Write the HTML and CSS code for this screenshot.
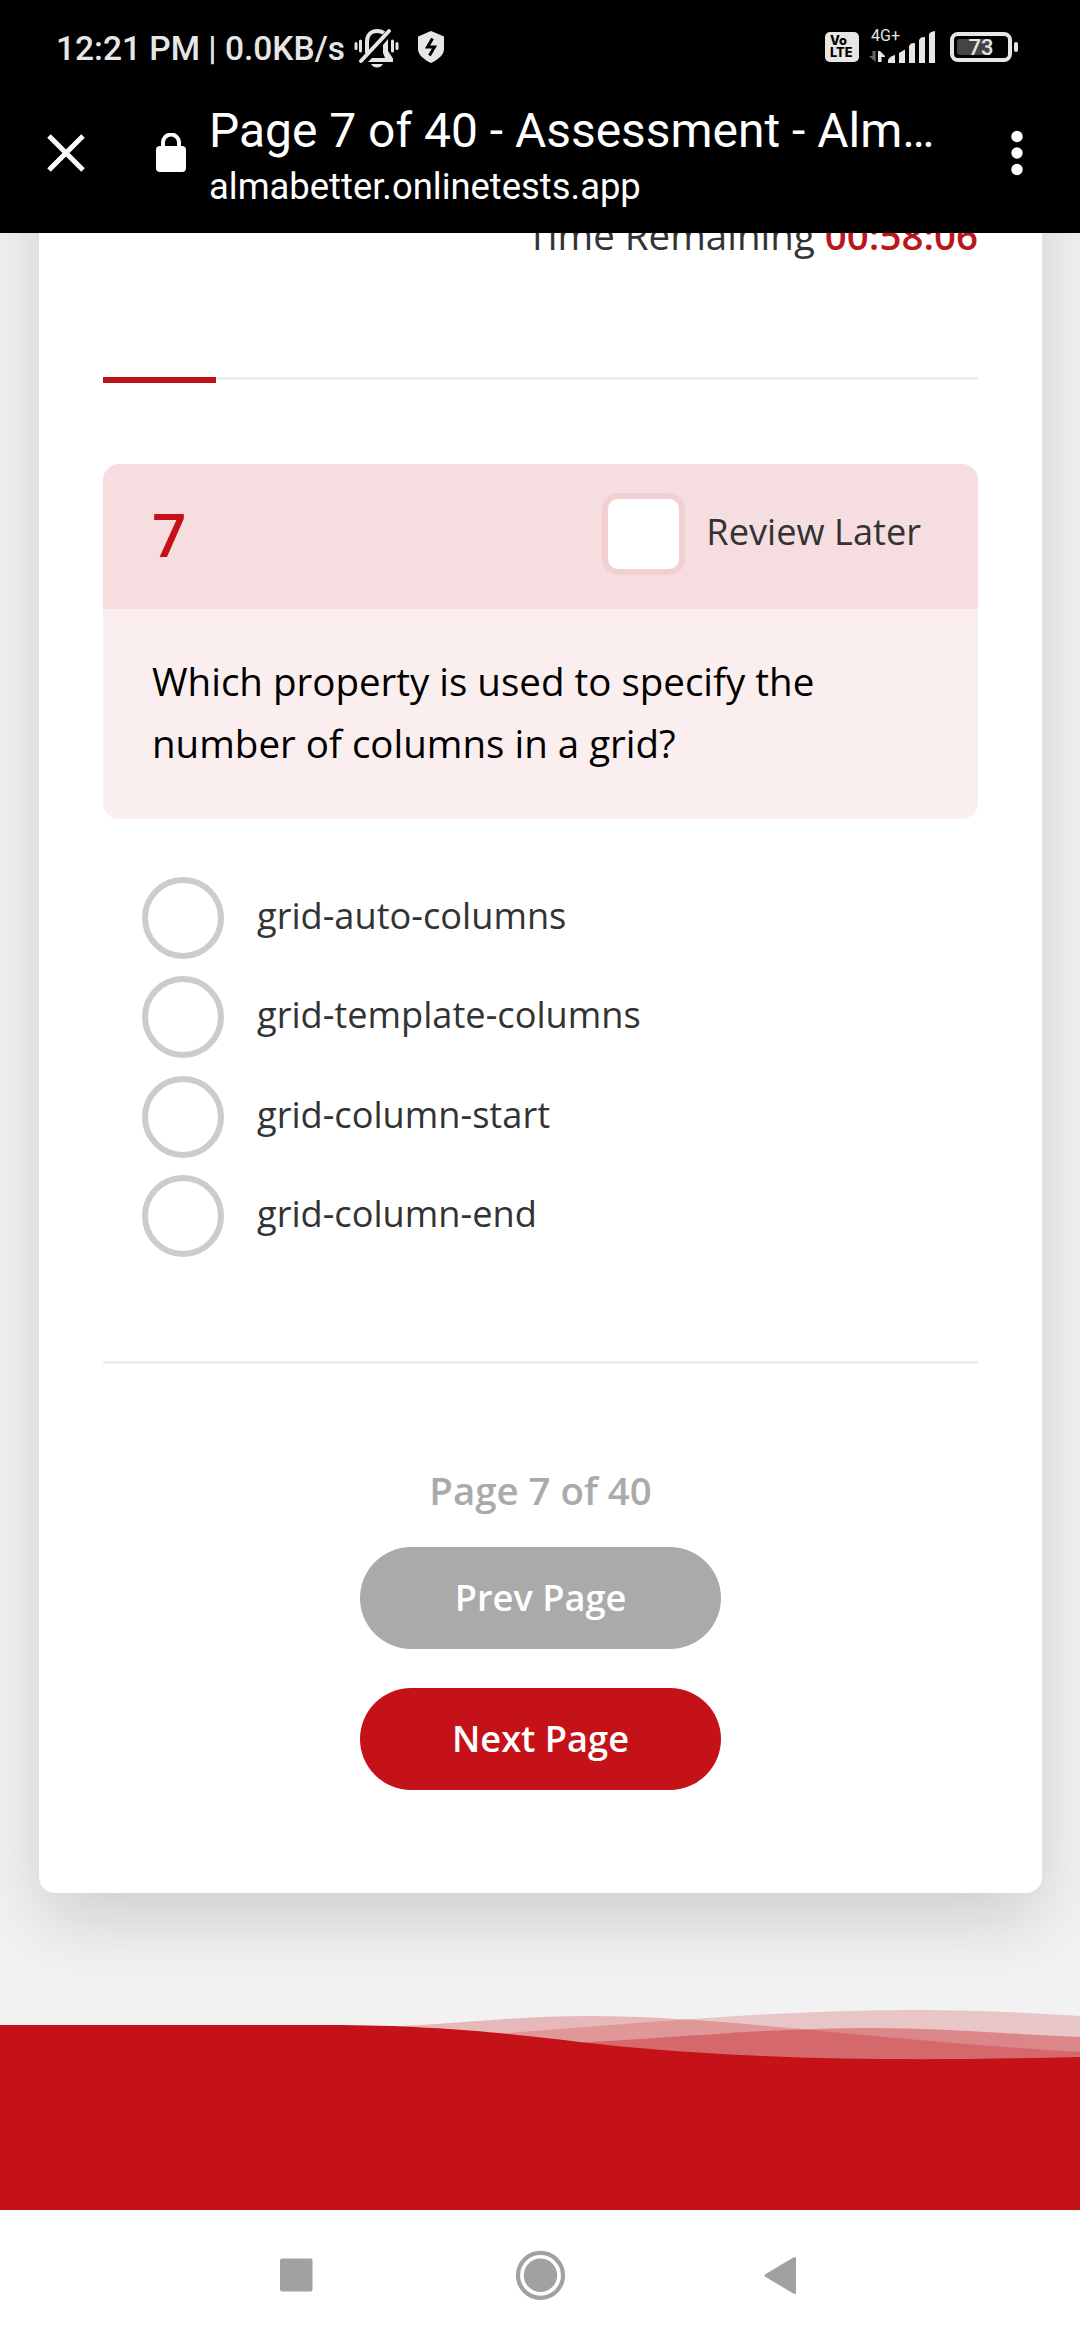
FILE: index.html
```html
<!DOCTYPE html>
<html lang="en">
<head>
<meta charset="utf-8">
<title>Page 7 of 40 - Assessment</title>
<link rel="stylesheet" href="styles.css">
</head>
<body>
<header class="top">
  <div class="status">
    <span class="status-text">12:21 PM | 0.0KB/s</span>
    <svg class="bell" width="46" height="42" viewBox="0 0 46 42">
      <g fill="none" stroke="#e6e6e6" stroke-linecap="round">
        <path stroke-width="3" d="M2 16.500v5M6.500 14v10M38.500 14v10M43 16.500v5"/>
        <path stroke-width="4" stroke-linecap="butt" d="M13 26V15C13 8 17 4 23 4C26 4 28 4.500 30 6"/>
        <path stroke-width="4" d="M7 34L35 4"/>
      </g>
      <path fill="#e6e6e6" d="M34 12V24L39 31.500V35H14L18 31H31L29 26V18ZM17 37H29Q27 40.500 23 40.500T17 37Z"/>
    </svg>
    <svg class="shield" width="28" height="32" viewBox="0 0 28 32">
      <path fill="#e6e6e6" d="M14 0L27 5.500V18C27 24 21 28.500 14 32C7 28.500 1 24 1 18V5.500Z"/>
      <path fill="none" stroke="#000" stroke-width="3" d="M15.500 7.500L10.500 16H17.500L12.500 24.500"/>
    </svg>
    <span class="volte"><b>Vo</b><b>LTE</b></span>
    <span class="signal">
      <span class="net">4G+</span>
      <svg width="68" height="34" viewBox="0 0 68 34">
        <path fill="#666" d="M3.500 21H6.500V32L0 26H3.500Z"/>
        <path fill="#e6e6e6" d="M9 21H11L16 26V27H12.500V32H9ZM19 33V30Q21 26 26 25V33ZM30 33V23L36 19.500V33ZM40 33V16L42 13.500L46 13V33ZM50 33V10L52 7.500L56 7V33ZM60 33V4L62 2L66 1V33Z"/>
      </svg>
    </span>
    <span class="battery"><span class="charge">73</span></span>
    <span class="nub"></span>
  </div>
  <div class="tab">
    <svg class="close" width="38" height="38" viewBox="0 0 38 38"><path fill="none" stroke="#fff" stroke-width="5" d="M2 2L36 36M36 2L2 36"/></svg>
    <svg class="lock" width="30" height="39" viewBox="0 0 30 39">
      <rect y="13" width="30" height="26" rx="4" fill="#fff"/>
      <path fill="none" stroke="#fff" stroke-width="4" d="M7 15V9.500a8 8 0 0 1 16 0V15"/>
    </svg>
    <div class="site">
      <div class="title">Page 7 of 40 - Assessment - Alm…</div>
      <div class="url">almabetter.onlinetests.app</div>
    </div>
    <svg class="menu" width="12" height="46" viewBox="0 0 12 46" fill="#fff"><circle cx="6" cy="6.500" r="5.700"/><circle cx="6" cy="23" r="5.700"/><circle cx="6" cy="39.500" r="5.700"/></svg>
  </div>
</header>
<main class="page">
  <section class="card">
    <div class="timer">Time Remaining <b>00:58:06</b></div>
    <div class="progress"><div class="bar"></div></div>
    <div class="question">
      <div class="question-head">
        <span class="number">7</span>
        <span class="checkbox"></span>
        <span class="review">Review Later</span>
      </div>
      <p class="question-text">Which property is used to specify the<br>number of columns in a grid?</p>
    </div>
    <div class="options">
      <label class="option"><span class="radio"></span><span>grid-auto-columns</span></label>
      <label class="option"><span class="radio"></span><span>grid-template-columns</span></label>
      <label class="option"><span class="radio"></span><span>grid-column-start</span></label>
      <label class="option"><span class="radio"></span><span>grid-column-end</span></label>
    </div>
    <div class="pager">
      <span class="count">Page 7 of 40</span>
      <button class="btn prev">Prev Page</button>
      <button class="btn next">Next Page</button>
    </div>
  </section>
  <svg class="wave" width="1080" height="210" viewBox="0 2000 1080 210">
    <g fill="#c41218">
      <path opacity=".2" d="M400 2040C580 2030 740 2010 918 2010C975 2010 1030 2013 1080 2016V2080H400Z"/>
      <path opacity=".26" d="M330 2028C430 2028 500 2016 590 2016C720 2016 850 2038 1080 2052V2080H330Z"/>
      <path opacity=".35" d="M500 2046C640 2042 750 2028 870 2028C940 2028 1010 2034 1080 2037V2080H500Z"/>
    </g>
    <path fill="#f2f2f2" d="M200 2025H330C370 2025 400 2027 430 2028V2030H200Z"/>
    <path fill="#c41218" d="M0 2025H327C480 2025 560 2042 650 2049C780 2060 920 2061 1080 2057V2210H0Z"/>
  </svg>
</main>
<nav class="nav">
  <svg width="1080" height="130" viewBox="0 0 1080 130">
    <g fill="#a1a1a1">
      <rect x="280" y="48.500" width="32.500" height="33" rx="2"/>
      <circle cx="540.500" cy="65.300" r="16.700"/>
      <circle cx="540.500" cy="65.300" r="22.500" fill="none" stroke="#a1a1a1" stroke-width="4.200"/>
      <path stroke="#a1a1a1" stroke-width="3" stroke-linejoin="round" d="M766 65.500L794.500 48.500V82.500Z"/>
    </g>
  </svg>
</nav>
</body>
</html>
```
FILE: styles.css
```css
* { box-sizing: border-box; }
body {
  margin: 0;
  width: 1080px;
  height: 2340px;
  display: flex;
  flex-direction: column;
  overflow: hidden;
  background: #f2f2f2;
  color: #333;
  font: 36.200px/50px "Open Sans", sans-serif;
}
svg { display: block; flex: none; }

.top {
  height: 233px;
  flex: none;
  background: #000;
  color: #fff;
  font-family: Roboto, sans-serif;
}
.status {
  height: 94px;
  padding-left: 56px;
  display: flex;
  align-items: center;
  color: #e6e6e6;
}
.status-text {
  width: 298px;
  font-size: 33.500px;
  font-weight: 500;
  line-height: 40px;
  padding-top: 4px;
  white-space: nowrap;
}
.bell { margin-top: 2px; }
.shield { margin-left: 17px; }
.volte {
  margin-left: 380px;
  width: 34px;
  height: 30px;
  padding: 3px 0 0 5px;
  border-radius: 5px;
  background: #e6e6e6;
  color: #000;
  display: flex;
  flex-direction: column;
}
.volte b { font: 800 12.800px/12px Inter, sans-serif; }
.signal {
  position: relative;
  margin-left: 10px;
}
.net {
  position: absolute;
  left: 2px;
  top: -3px;
  font-size: 16px;
  line-height: 18px;
}
.battery {
  margin-left: 13px;
  width: 62px;
  height: 30px;
  padding: 3px;
  border: 4px solid #e6e6e6;
  border-radius: 8px;
}
.charge {
  display: block;
  width: 48px;
  height: 16px;
  border-radius: 3px;
  background: linear-gradient(90deg, #444 34px, transparent 34px);
  font-size: 22px;
  font-weight: 500;
  line-height: 18px;
  text-align: center;
}
.nub {
  margin-left: 2px;
  width: 4px;
  height: 10px;
  border-radius: 2px;
  background: #e6e6e6;
}
.tab {
  height: 118px;
  padding-left: 47px;
  display: flex;
  align-items: center;
}
.lock { margin-left: 71px; margin-top: -2px; }
.site {
  margin-left: 23px;
  width: 802px;
  padding-top: 6px;
  white-space: nowrap;
}
.title { font-size: 47.950px; line-height: 62px; }
.url { font-size: 36.400px; line-height: 50px; }

.page {
  height: 1977px;
  flex: none;
  overflow: hidden;
  display: flex;
  flex-direction: column;
  align-items: center;
}
.card {
  flex: none;
  width: 1003px;
  height: 1780px;
  margin: -120px 0 0 1px;
  padding: 97px 64px 0;
  border-radius: 16px;
  background: #fff;
  box-shadow: 0 27px 69px rgba(0, 0, 0, .15);
}
.timer { text-align: right; font-size: 38.500px; }
.timer b { font-weight: 600; color: #bb161b; }
.progress {
  height: 6px;
  margin-top: 117px;
  background: linear-gradient(#eee 3px, transparent 3px);
}
.bar { width: 113px; height: 6px; background: #c01319; }
.question {
  margin-top: 81px;
  height: 355px;
  border-radius: 16px;
  background: #faeeee;
  overflow: hidden;
}
.question-head {
  height: 145px;
  padding: 0 57px 5px 49px;
  display: flex;
  align-items: center;
  background: #f6dee0;
}
.number {
  flex: 1;
  font-size: 60px;
  line-height: 80px;
  font-weight: 600;
  color: #c41218;
}
.checkbox {
  width: 83px;
  height: 82px;
  border: 6px solid #f2d0d2;
  border-radius: 16px;
  background: #fff;
}
.review { margin-left: 21px; padding-bottom: 6px; }
.question-text {
  margin: 0;
  padding: 41px 49px 0;
  color: #000;
  font-size: 38.500px;
  line-height: 62px;
}
.options {
  padding: 58px 0 104px 39px;
  border-bottom: 3px solid #eee;
  display: grid;
  gap: 17.400px;
}
.option { height: 82px; display: flex; align-items: center; gap: 33px; }
.option span:last-child { padding-bottom: 6px; }
.radio {
  width: 82px;
  height: 82px;
  border: 6px solid #ccc;
  border-radius: 50%;
}
.pager {
  padding-top: 100px;
  display: flex;
  flex-direction: column;
  align-items: center;
}
.count {
  font-size: 38.400px;
  line-height: 52px;
  font-weight: 600;
  color: #aaa;
  margin-bottom: 31px;
}
.btn {
  width: 361px;
  height: 102px;
  padding: 0 0 2px;
  border: 0;
  border-radius: 51px;
  color: #fff;
  font: 600 36.200px/50px "Open Sans", sans-serif;
}
.prev { background: #aaa; margin-bottom: 39px; }
.next { background: #c41218; }
.wave { margin-top: auto; }

.nav { height: 130px; flex: none; background: #fff; }
```
